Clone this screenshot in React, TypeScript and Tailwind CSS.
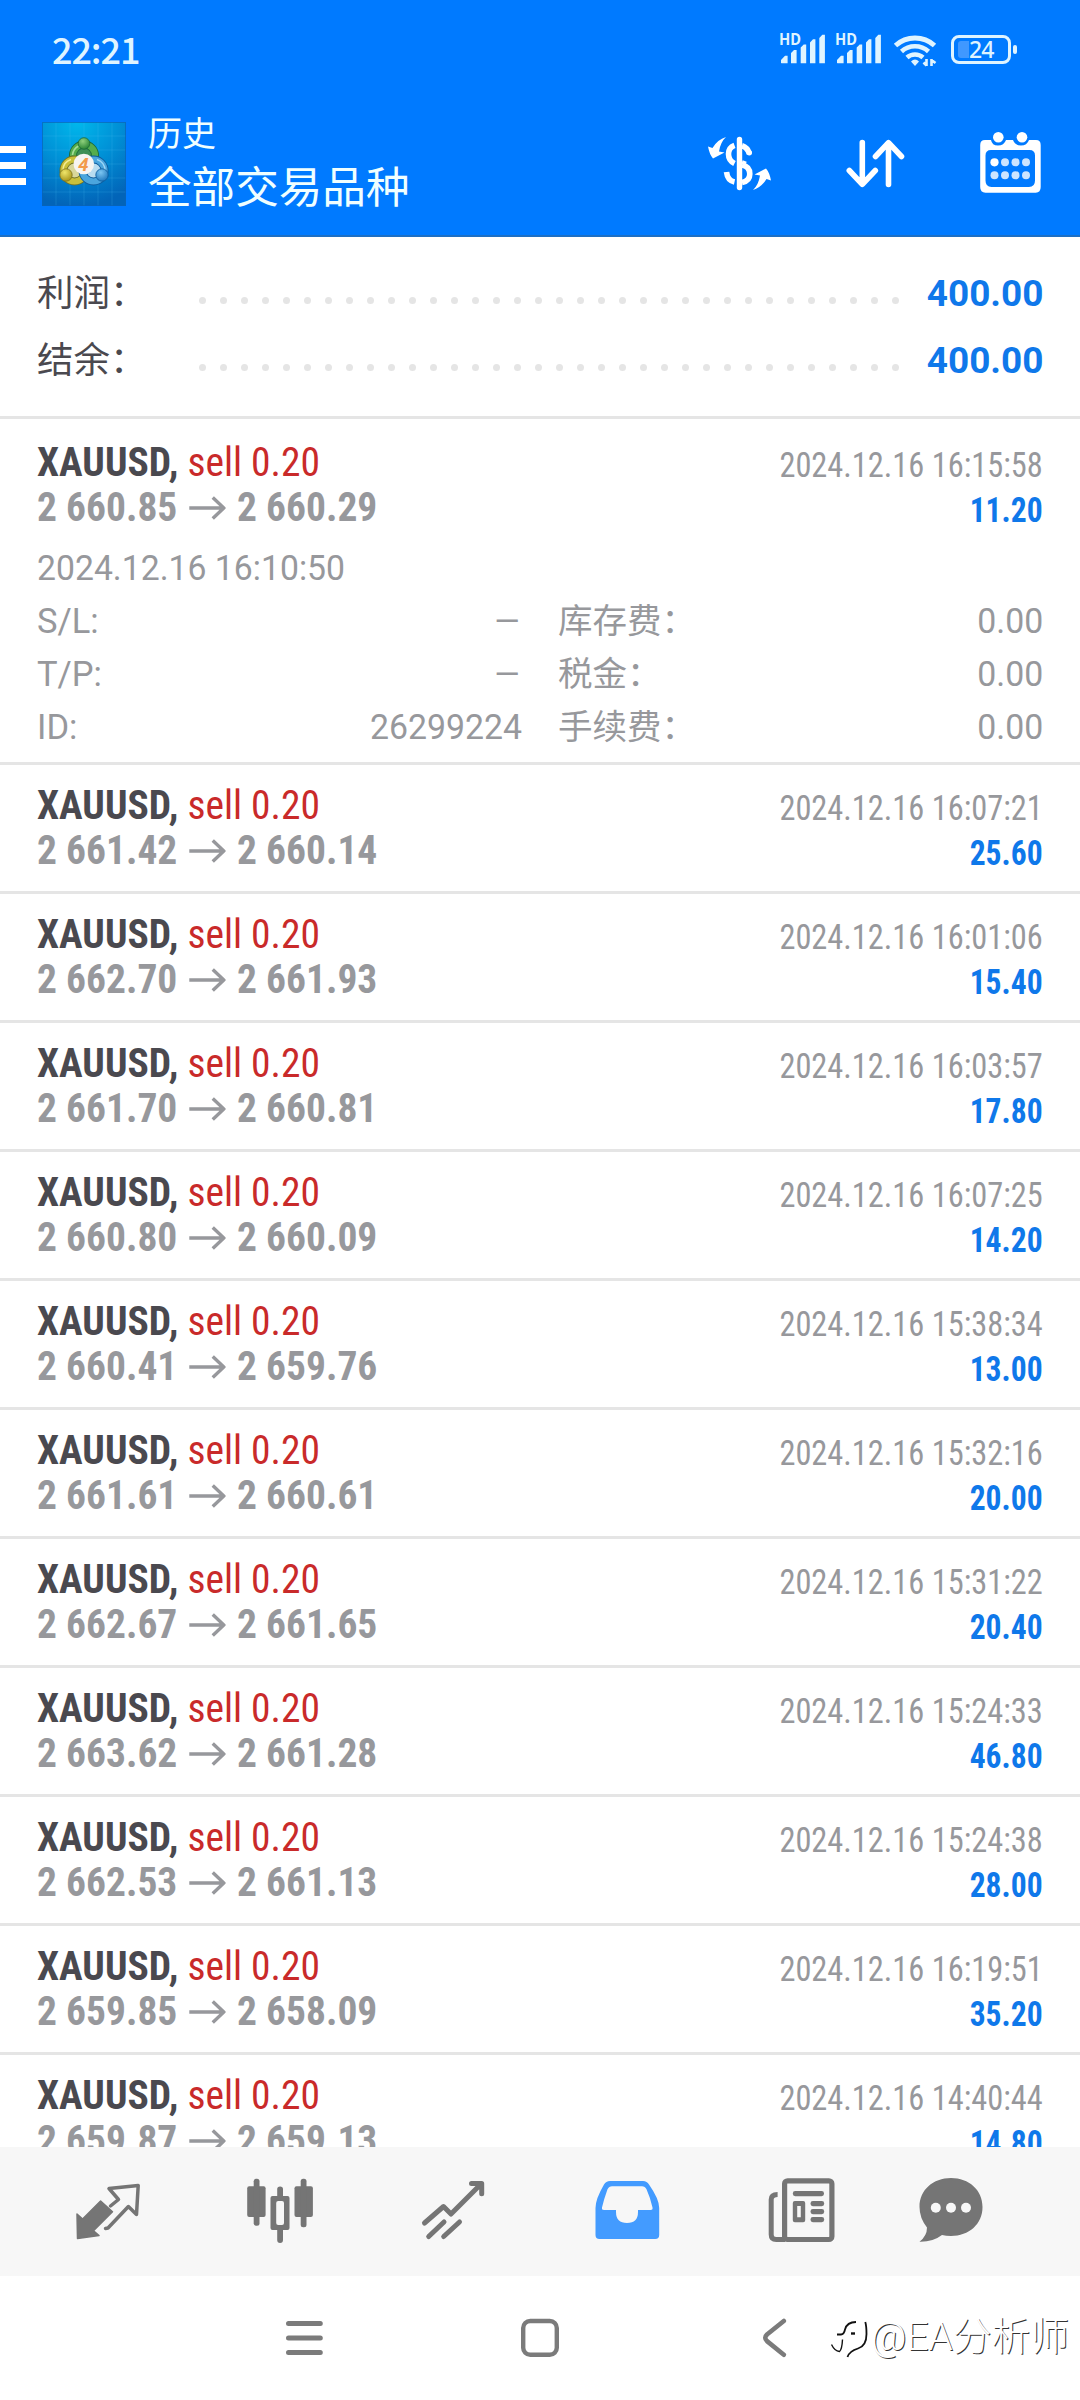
import React from "react";

type Trade = { open: string; close: string; time: string; profit: string };

const trades: Trade[] = [
  { open: "2 660.85", close: "2 660.29", time: "2024.12.16 16:15:58", profit: "11.20" },
  { open: "2 661.42", close: "2 660.14", time: "2024.12.16 16:07:21", profit: "25.60" },
  { open: "2 662.70", close: "2 661.93", time: "2024.12.16 16:01:06", profit: "15.40" },
  { open: "2 661.70", close: "2 660.81", time: "2024.12.16 16:03:57", profit: "17.80" },
  { open: "2 660.80", close: "2 660.09", time: "2024.12.16 16:07:25", profit: "14.20" },
  { open: "2 660.41", close: "2 659.76", time: "2024.12.16 15:38:34", profit: "13.00" },
  { open: "2 661.61", close: "2 660.61", time: "2024.12.16 15:32:16", profit: "20.00" },
  { open: "2 662.67", close: "2 661.65", time: "2024.12.16 15:31:22", profit: "20.40" },
  { open: "2 663.62", close: "2 661.28", time: "2024.12.16 15:24:33", profit: "46.80" },
  { open: "2 662.53", close: "2 661.13", time: "2024.12.16 15:24:38", profit: "28.00" },
  { open: "2 659.85", close: "2 658.09", time: "2024.12.16 16:19:51", profit: "35.20" },
  { open: "2 659.87", close: "2 659.13", time: "2024.12.16 14:40:44", profit: "14.80" },
];

function Signal() {
  return (
    <svg className="h-[32px] w-[48px] overflow-visible" viewBox="0 0 48 32" fill="#dff4ff">
      <text x="0" y="12.300" fontSize="15.500" fontWeight="700" fontFamily="Noto Sans" textLength="22" lengthAdjust="spacingAndGlyphs">HD</text>
      <path d="M2 30v-3l4-4.300h2.600V30.300H2.600zM12 30.300V20l3-3h2.600v13.300zM21.700 30.300V14.600l3-3h2.500v18.700zM31 30.300V9.500l3-3.200h2.400v24zM40.300 30.300V5l3-3.300h2.600v28.600z" />
    </svg>
  );
}

function StatusIcons() {
  return (
    <div className="flex items-start">
      <Signal />
      <div className="w-[8px]" />
      <Signal />
      <svg className="ml-[10px] h-[34px] w-[44px]" viewBox="893 33 44 34" fill="none" stroke="#dff4ff">
        <path d="M895.500 45.500a29 29 0 0 1 39 0" strokeWidth="5" />
        <path d="M901.500 51.500a20 20 0 0 1 27 0" strokeWidth="4.600" />
        <path d="M907 57.500a12 12 0 0 1 16 0" strokeWidth="4.600" />
        <path d="M911 61.500q4-4 8 0l-4 4.500z" fill="#dff4ff" stroke="none" />
        <path d="M926.500 66v-7M923.500 62.500l3 3M931.500 59v7M931.500 60l4 3" strokeWidth="2.600" />
      </svg>
      <div className="relative ml-[14px] mt-[2px] h-[29px] w-[60px] rounded-[8px] border-[3px] border-[#dff4ff]">
        <div className="absolute left-[4px] top-[3px] h-[17px] w-[11px] rounded-l-[3px] bg-[#4098ff]" />
        <div className="absolute left-[15px] top-[-3px] font-['Noto_Sans'] text-[23px] leading-[29px] font-medium tracking-[-1px] text-[#dff4ff]">24</div>
        <div className="absolute left-[59px] top-[7px] h-[9px] w-[4px] rounded-[2px] bg-[#dff4ff]" />
      </div>
    </div>
  );
}

function AppLogo() {
  return (
    <svg className="ml-[16px] h-[84px] w-[84px]" viewBox="0 0 84 84">
      <defs>
        <radialGradient id="sky" cx="0.42" cy="0" r="1">
          <stop offset="0" stopColor="#00b8ec" />
          <stop offset="0.5" stopColor="#0090d6" />
          <stop offset="1" stopColor="#0264b8" />
        </radialGradient>
        <radialGradient id="green" cx="0.4" cy="0.3" r="0.8">
          <stop offset="0" stopColor="#8fd07c" />
          <stop offset="1" stopColor="#1b7a2a" />
        </radialGradient>
        <radialGradient id="gold" cx="0.4" cy="0.3" r="0.8">
          <stop offset="0" stopColor="#efe56a" />
          <stop offset="1" stopColor="#a08c12" />
        </radialGradient>
        <radialGradient id="azure" cx="0.4" cy="0.3" r="0.8">
          <stop offset="0" stopColor="#7cc6f2" />
          <stop offset="1" stopColor="#1670b8" />
        </radialGradient>
      </defs>
      <rect width="84" height="84" fill="url(#sky)" />
      <path d="M14 0v84M28 0v84M42 0v84M56 0v84M70 0v84M0 14h84M0 28h84M0 42h84M0 56h84M0 70h84" stroke="#4fc0ee" strokeOpacity="0.2" strokeWidth="1" />
      <rect x="0.500" y="0.500" width="83" height="83" fill="none" stroke="#0a62b8" strokeOpacity="0.7" />
      <circle cx="42" cy="33.500" r="11" fill="#3f8f55" stroke="#1c6a3a" strokeWidth="8" />
      <circle cx="42" cy="33.500" r="11" fill="none" stroke="#55ad4d" strokeWidth="6.200" />
      <path d="M30.500 33a11.500 11.500 0 0 1 6-9" fill="none" stroke="#a6dc98" strokeWidth="1.600" />
      <circle cx="32.500" cy="48.500" r="11" fill="#d9d79a" stroke="#6f7224" strokeWidth="8" />
      <circle cx="32.500" cy="48.500" r="11" fill="none" stroke="#c9bf3a" strokeWidth="6.200" />
      <path d="M21 48a11.500 11.500 0 0 1 8-10.500" fill="none" stroke="#f3ec92" strokeWidth="1.600" />
      <circle cx="51.500" cy="48.500" r="11" fill="#b9dcf0" stroke="#0d5a9c" strokeWidth="8" />
      <circle cx="51.500" cy="48.500" r="11" fill="none" stroke="#4aa5dd" strokeWidth="6.200" />
      <path d="M55 37.500a11.500 11.500 0 0 1 8 11" fill="none" stroke="#9ed6f6" strokeWidth="1.600" />
      <circle cx="42" cy="21.500" r="5.800" fill="url(#green)" stroke="#1c6a3a" strokeWidth="0.800" />
      <circle cx="24" cy="53" r="6.200" fill="url(#gold)" stroke="#7c7420" strokeWidth="0.800" />
      <circle cx="60" cy="53" r="6.200" fill="url(#azure)" stroke="#0d5a9c" strokeWidth="0.800" />
      <circle cx="41.800" cy="42" r="10.300" fill="#f7f4f1" />
      <text x="41.500" y="48.800" fontSize="18" fontWeight="700" fontStyle="italic" fontFamily="Noto Sans" textAnchor="middle" fill="#f29a4a">4</text>
    </svg>
  );
}

function DollarIcon() {
  return (
    <svg className="h-[56px] w-[66px]" viewBox="707 136 66 56" fill="none" stroke="white">
      <path d="M739.500 139.500V187.500" strokeWidth="5.400" strokeLinecap="round" />
      <path d="M734.500 145.300Q728.500 147.500 728.500 154T734.500 163.500M742 145.800Q747.500 147.500 749.500 154M742 165Q749.800 166.500 749.800 174Q749.800 181 742 182.500M726.500 172Q727.500 180.500 734.500 182" strokeWidth="5.600" />
      <circle cx="749.300" cy="152.700" r="2.700" fill="white" stroke="none" />
      <path d="M742 162L746 163.500" strokeWidth="4" />
      <path d="M726 137q-5.500 5-7 14.500l5.500 1-11.500 6q-3.500-4-5-12l4.500 1.500q5-8.500 13.500-11zM753 190q5.500-5 7-14.500l-5.500-1 11.500-6q3.500 4 5 12l-4.500-1.500q-5 8.500-13.500 11z" fill="white" stroke="none" />
    </svg>
  );
}

function SortIcon() {
  return (
    <svg className="h-[52px] w-[62px]" viewBox="844 138 62 52" fill="none" stroke="white" strokeWidth="5.600" strokeLinecap="round" strokeLinejoin="round">
      <path d="M862.300 142.500V184M849.300 170.500L862.300 184.300L875.300 170.500M888.500 184.500V143M875.500 156.500L888.500 142.700L901.500 156.500" />
    </svg>
  );
}

function CalendarIcon() {
  return (
    <svg className="h-[62px] w-[62px]" viewBox="980 132 62 62" fill="white">
      <path fillRule="evenodd" d="M985 140h6q1 5.500 7 5.500t8-5.500h7q2 5.500 8 5.500t8-5.500h7q4.700 0 4.700 5v42q0 5.700-5 5.700h-50.200q-5.300 0-5.300-5.700v-42q0-5 4.800-5zM991 150q-5.500 0-5.500 5.500v25q0 6.500 6 6.500h37.500q6 0 6-6.500v-25q0-5.500-5.500-5.500z" />
      <circle cx="998.300" cy="137.300" r="5.300" />
      <circle cx="1022" cy="137.300" r="5.300" />
      <circle cx="994.500" cy="162.300" r="4.100" />
      <g fill="#cce4ff">
        <circle cx="1005" cy="162.300" r="4" />
        <circle cx="1015.500" cy="162.300" r="4" />
        <circle cx="1026" cy="162.300" r="4" />
        <circle cx="994.500" cy="175.300" r="4" />
        <circle cx="1005" cy="175.300" r="4" />
        <circle cx="1015.500" cy="175.300" r="4" />
        <circle cx="1026" cy="175.300" r="4" />
      </g>
    </svg>
  );
}

function Header() {
  return (
    <header className="h-[237px] border-b-2 border-[#1d6fc4] bg-[#007aff] text-[#f0ffff]">
      <div className="flex h-[100px] items-start justify-between pl-[52px] pr-[69px] pt-[33px]">
        <div className="mt-[-3px] font-['Noto_Sans_CJK_SC'] text-[36px] leading-[36px] font-medium tracking-[-1.100px] text-[#dff4ff]">22:21</div>
        <StatusIcons />
      </div>
      <div className="flex items-start">
        <div className="mt-[46px] flex w-[26px] flex-col gap-[9px]">
          <i className="h-[7px] bg-white" />
          <i className="h-[7px] bg-white" />
          <i className="h-[7px] bg-white" />
        </div>
        <div className="mt-[22px]"><AppLogo /></div>
        <div className="ml-[22px] mt-[14px] flex-1 whitespace-nowrap">
          <div className="text-[34px] leading-[40px]">历史</div>
          <div className="mt-[5px] text-[43.600px] leading-[60px]">全部交易品种</div>
        </div>
        <div className="mt-[36px]"><DollarIcon /></div>
        <div className="ml-[71px] mt-[38px]"><SortIcon /></div>
        <div className="ml-[74px] mr-[38px] mt-[32px]"><CalendarIcon /></div>
      </div>
    </header>
  );
}

function SummaryRow({ label, value }: { label: string; value: string }) {
  return (
    <div className="flex h-[67px] items-center pl-[37px] pr-[37px]">
      <div className="mt-[3px] w-[162px] text-[36.500px] text-[#4a494f]">{label}</div>
      <div className="mt-[16px] flex flex-1 gap-[14px]">
        {Array.from({ length: 34 }, (_, i) => (
          <i key={i} className="size-[7px] shrink-0 rounded-full bg-[#e5e5e5]" />
        ))}
      </div>
      <div className="mt-px origin-right scale-x-[0.985] text-[37.500px] font-bold text-[#0f78ea]">{value}</div>
    </div>
  );
}

function Arrow() {
  return (
    <svg className="mx-[12px] h-[24px] w-[38px]" viewBox="0 0 38 24" fill="none" stroke="#97989c" strokeWidth="3.600">
      <path d="M0 12H36M24.500 1.500L36 12L24.500 22.500" />
    </svg>
  );
}

function TradeRow({ t, first }: { t: Trade; first?: boolean }) {
  return (
    <div className={first ? "pt-[3px]" : ""}>
      <div className="flex h-[126px] justify-between px-[37px] pt-[18px] [font-stretch:75%]">
        <div className="origin-left scale-x-[0.963] whitespace-nowrap">
          <div className="text-[41px] leading-[45px] text-[#c92a2a]">
            <span className="font-bold text-[#4a494f]">XAUUSD,</span> sell 0.20
          </div>
          <div className="flex items-center text-[41px] leading-[45px] font-bold text-[#97989c]">
            <span>{t.open}</span>
            <Arrow />
            <span>{t.close}</span>
          </div>
        </div>
        <div className="pt-[3px] text-right text-[34.500px] leading-[45px]">
          <div className="origin-right scale-x-[0.938] text-[#97989c]">{t.time}</div>
          <div className="origin-right scale-x-[0.915] font-bold text-[#0f78ea]">{t.profit}</div>
        </div>
      </div>
    </div>
  );
}

function DetailRow({ a, b, c }: { a: string; b: string; c: string }) {
  return (
    <div className="flex h-[53px] items-center">
      <div className="flex w-[485px] justify-between">
        <span>{a}</span>
        <span className={b === "–" ? "origin-right scale-x-125" : "origin-right scale-x-[0.98]"}>{b}</span>
      </div>
      <div className="ml-[36px] flex-1">{c}</div>
      <div className="origin-right scale-x-[0.98]">0.00</div>
    </div>
  );
}

function Watermark() {
  return (
    <div className="absolute left-[831px] top-[2307px] flex items-center">
      <svg className="mt-[6px] h-[42px] w-[38px]" viewBox="831 2325 38 42" fill="none" stroke="#111" strokeWidth="1.800">
        <path d="M837 2340.500h4q3 0 4-5q2-7.500 11-7.500" />
        <path d="M851 2339.500h4" strokeWidth="2.400" />
        <path d="M865.300 2328q1.200 4 1.200 12q0 12-8.500 14.500T847.500 2363" />
        <path d="M831.500 2350.500q3 6.500 8 7q2.500-2 3-12" strokeWidth="1.400" />
      </svg>
      <span className="ml-[2px] text-[38.800px] leading-[60px] font-light text-white [text-shadow:1px_1px_0_#333]">@EA分析师</span>
    </div>
  );
}

function TabBar() {
  return (
    <nav className="flex h-[129px] items-start bg-[#f7f7f7] pt-[29px]">
      <svg className="ml-[74px] h-[70px] w-[68px]" viewBox="74 2176 68 70" fill="none" stroke="#757575" strokeLinejoin="round" strokeLinecap="round">
        <path d="M77 2214L82.600 2219L100.600 2201L112.500 2211.700L93.500 2230.700L99 2235.500L77.500 2238.500z" fill="#757575" strokeWidth="1.500" />
        <path d="M110.500 2206L118.500 2199.500L109 2188.500L138.200 2185.500L136.500 2214.500L128.400 2206.500L108 2228L105.500 2228.500" strokeWidth="3.500" />
      </svg>
      <svg className="ml-[104px] h-[70px] w-[68px]" viewBox="246 2176 68 70" fill="#757575">
        <rect x="247.200" y="2186.300" width="18.400" height="30.700" rx="2" />
        <rect x="253.700" y="2178.700" width="5.800" height="47" rx="2.500" />
        <path fillRule="evenodd" d="M272.500 2196h15q2 0 2 2v30q0 2-2 2h-15q-2 0-2-2v-30q0-2 2-2zM276.200 2203v20q0 2 2 2h3.800q2 0 2-2v-20q0-2-2-2h-3.800q-2 0-2 2z" />
        <path d="M277.200 2197v-8q0-2.500 2.900-2.500t2.900 2.500v8zM277.200 2229v11q0 3 2.900 3t2.900-3v-11z" />
        <rect x="294.500" y="2186.300" width="18.400" height="30.700" rx="2" />
        <rect x="300.700" y="2178.700" width="5.800" height="48.600" rx="2.500" />
      </svg>
      <svg className="ml-[106px] h-[70px] w-[68px]" viewBox="420 2176 68 70" fill="none" stroke="#757575" strokeWidth="5" strokeLinecap="round" strokeLinejoin="round">
        <path d="M424.500 2223L443.500 2206.500L451 2214L480 2185M471.500 2183.500H481.700V2193.700M428.700 2236.500L444 2222M443.700 2236.500L459.500 2222" />
      </svg>
      <svg className="ml-[106px] h-[70px] w-[68px]" viewBox="594 2176 68 70" fill="#439bff">
        <path fillRule="evenodd" d="M610 2181H643q4 0 6 3.500Q659.200 2199 659.200 2208V2235q0 4-4 4H599.500q-4 0-4-4V2208Q595.500 2199 604 2184.500q2-3.500 6-3.500zM612 2186.300q-3 0-4.500 3Q604 2199 602 2207.500q-.5 2.500 2 2.500H616v2q0 11 11 11t11-11v-2H650.500q2.500 0 2-2.500Q650 2197 646.500 2189.300q-1.500-3-4.500-3z" />
      </svg>
      <svg className="ml-[104px] h-[70px] w-[72px]" viewBox="766 2176 72 70" fill="#757575">
        <rect x="784.600" y="2180.800" width="47.300" height="58.700" rx="3" fill="none" stroke="#757575" strokeWidth="5.200" />
        <path d="M777.600 2194.600q-6.400 0-6.400 5V2234.500q0 5 5 5H785" fill="none" stroke="#757575" strokeWidth="5" />
        <rect x="792.800" y="2191" width="31.200" height="5.200" rx="2.400" />
        <path fillRule="evenodd" d="M794.800 2201h8.400q2 0 2 2v17.300q0 2-2 2h-8.400q-2 0-2-2v-17.300q0-2 2-2zM797.200 2206v11.300h3.600V2206z" />
        <rect x="810.500" y="2201" width="13.700" height="5.200" rx="2.400" />
        <rect x="810.500" y="2209" width="13.700" height="5.200" rx="2.400" />
        <rect x="810.500" y="2217" width="13.700" height="5.200" rx="2.400" />
      </svg>
      <svg className="ml-[80px] h-[70px] w-[68px]" viewBox="918 2176 68 70">
        <path fill="#757575" d="M951 2178C969 2178 982.500 2190 982.500 2207S969 2236 951 2236Q946 2236 942 2235Q933 2242 919.500 2241.700Q927 2236 927 2227.500Q919.500 2218 919.500 2207C919.500 2190 933 2178 951 2178z" />
        <g fill="#f7f7f7">
          <circle cx="935.800" cy="2207.700" r="5" />
          <circle cx="951" cy="2207.700" r="5" />
          <circle cx="966" cy="2207.700" r="5" />
        </g>
      </svg>
    </nav>
  );
}

export default function App() {
  return (
    <div className="relative flex h-[2400px] w-[1080px] flex-col overflow-hidden bg-white font-['Roboto','Noto_Sans_CJK_SC',sans-serif]">
      <Header />
      <section className="h-[182px] shrink-0 border-b-[3px] border-[#e5e5e5] pt-[22px]">
        <SummaryRow label="利润：" value="400.00" />
        <SummaryRow label="结余：" value="400.00" />
      </section>
      <main className="h-[1728px] shrink-0 overflow-hidden">
        {trades.map((t, i) => (
          <div key={i} className="border-b-[3px] border-[#e5e5e5]">
            <TradeRow t={t} first={i === 0} />
            {i === 0 && (
              <div className="mt-[-6px] h-[220px] pl-[37px] pr-[37px] text-[34.500px] leading-[53px] text-[#97989c]">
                <div className="h-[53px] w-fit origin-left scale-x-[0.978]">2024.12.16 16:10:50</div>
                <DetailRow a="S/L:" b="–" c="库存费：" />
                <DetailRow a="T/P:" b="–" c="税金：" />
                <DetailRow a="ID:" b="26299224" c="手续费：" />
              </div>
            )}
          </div>
        ))}
      </main>
      <TabBar />
      <div className="flex h-[124px] items-start pt-[42px]">
        <svg className="ml-[286px] h-[40px] w-[37px]" viewBox="286 2318 37 40" stroke="#7b7b7b" strokeWidth="5" strokeLinecap="round">
          <path d="M288.500 2323.500H320.300M288.500 2338H320.300M288.500 2352.500H320.300" />
        </svg>
        <svg className="ml-[197px] h-[40px] w-[40px]" viewBox="520 2318 40 40" fill="none" stroke="#7b7b7b" strokeWidth="4.400">
          <rect x="523.200" y="2321" width="33.600" height="33.800" rx="7" />
        </svg>
        <svg className="ml-[202px] h-[40px] w-[26px]" viewBox="762 2318 26 40" fill="none" stroke="#7b7b7b" strokeWidth="4.600" strokeLinecap="round" strokeLinejoin="round">
          <path d="M783.800 2321L767 2334.500q-3.500 3.300 0 6.600L783.800 2354.700" />
        </svg>
      </div>
      <Watermark />
    </div>
  );
}
